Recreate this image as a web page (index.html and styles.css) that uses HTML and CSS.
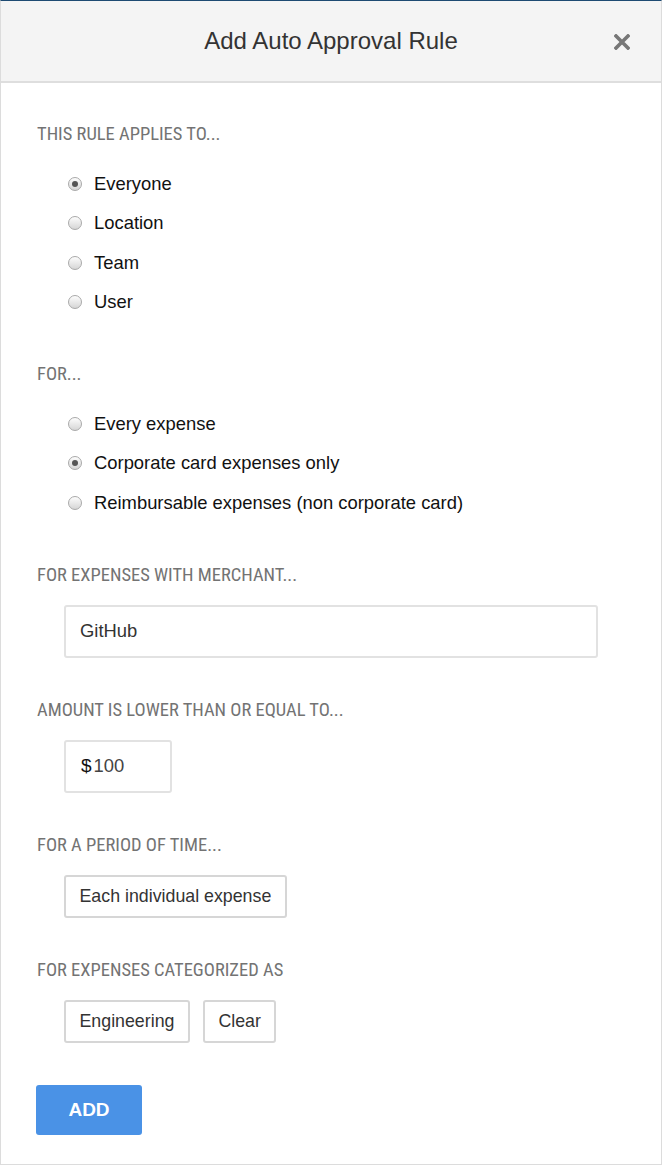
FILE: index.html
```html
<!DOCTYPE html>
<html>
<head>
<meta charset="utf-8">
<link rel="stylesheet" href="styles.css">
</head>
<body>
<div class="modal">
  <header class="modal-header">
    <h1 class="modal-title">Add Auto Approval Rule</h1>
    <button class="close" aria-label="Close">
      <svg width="16" height="16" viewBox="0 0 16 16"><path d="M2 2 L14 14 M14 2 L2 14" stroke="#777" stroke-width="3.6" stroke-linecap="square"/></svg>
    </button>
  </header>
  <div class="modal-body">
    <section class="field">
      <h2 class="field-label">This rule applies to...</h2>
      <div class="options">
        <label class="option"><input type="radio" name="who" checked><span>Everyone</span></label>
        <label class="option"><input type="radio" name="who"><span>Location</span></label>
        <label class="option"><input type="radio" name="who"><span>Team</span></label>
        <label class="option"><input type="radio" name="who"><span>User</span></label>
      </div>
    </section>
    <section class="field">
      <h2 class="field-label">For...</h2>
      <div class="options">
        <label class="option"><input type="radio" name="for"><span>Every expense</span></label>
        <label class="option"><input type="radio" name="for" checked><span>Corporate card expenses only</span></label>
        <label class="option"><input type="radio" name="for"><span>Reimbursable expenses (non corporate card)</span></label>
      </div>
    </section>
    <section class="field">
      <h2 class="field-label">For expenses with merchant...</h2>
      <div class="indent">
        <div class="text-input merchant">GitHub</div>
      </div>
    </section>
    <section class="field">
      <h2 class="field-label">Amount is lower than or equal to...</h2>
      <div class="indent">
        <div class="text-input amount"><span class="currency">$</span><span class="amount-value">100</span></div>
      </div>
    </section>
    <section class="field">
      <h2 class="field-label">For a period of time...</h2>
      <div class="indent buttons">
        <button class="btn">Each individual expense</button>
      </div>
    </section>
    <section class="field">
      <h2 class="field-label">For expenses categorized as</h2>
      <div class="indent buttons">
        <button class="btn">Engineering</button>
        <button class="btn">Clear</button>
      </div>
    </section>
    <button class="btn-primary">ADD</button>
  </div>
</div>
</body>
</html>
```
FILE: styles.css
```css
* { box-sizing: border-box; }
html, body { margin: 0; padding: 0; background: #fff; }
body { font-family: "Liberation Sans", Arial, sans-serif; color: #222; }

.modal {
  width: 662px;
  height: 1165px;
  border: 1px solid #dcdcdc;
  border-top: 1px solid #1d4a72;
  background: #fff;
  display: flex;
  flex-direction: column;
}

.modal-header {
  height: 82px;
  flex: none;
  background: #f4f4f4;
  border-bottom: 2px solid #dedede;
  display: flex;
  align-items: center;
  justify-content: center;
  position: relative;
}
.modal-title {
  margin: 0;
  font-size: 24px;
  font-weight: 400;
  color: #333;
}
.close {
  position: absolute;
  right: 31px;
  top: 33px;
  width: 16px;
  height: 16px;
  padding: 0;
  border: 0;
  background: none;
  display: block;
}
.close svg { display: block; }

.modal-body {
  padding: 41px 36px 0 35px;
  display: flex;
  flex-direction: column;
  align-items: flex-start;
}

.field { margin-bottom: 42px; align-self: stretch; }
.field-label {
  margin: 0 0 20px 1px;
  font-family: "Roboto Condensed", "Liberation Sans Narrow", Roboto, sans-serif;
  font-stretch: condensed;
  font-weight: 400;
  font-size: 18.5px;
  line-height: 20px;
  text-transform: uppercase;
  color: #737373;
}

.options { padding-left: 32px; display: flex; flex-direction: column; }
.option {
  height: 39.5px;
  display: flex;
  align-items: center;
  gap: 12px;
  font-size: 18.4px;
  color: #111;
}
.option input {
  appearance: none;
  -webkit-appearance: none;
  margin: 0;
  width: 14px;
  height: 14px;
  border-radius: 50%;
  border: 1px solid #a9a9a9;
  background: linear-gradient(#fdfdfd, #d6d6d6);
  display: grid;
  place-items: center;
  flex: none;
}
.option input:checked::after {
  content: "";
  width: 6px;
  height: 6px;
  border-radius: 50%;
  background: #555;
}

.indent { padding-left: 28px; }
.buttons { display: flex; gap: 13px; }

.text-input {
  height: 53px;
  border: 2px solid #e2e2e2;
  border-radius: 3px;
  display: flex;
  align-items: center;
  font-size: 18.4px;
  color: #333;
}
.merchant { width: 534px; padding-left: 14px; }
.amount { width: 108px; padding-left: 15px; }
.currency { font-size: 19px; color: #111; margin-right: 2px; }
.amount-value { color: #444; }

.btn {
  height: 43px;
  padding: 0 13.5px;
  border: 2px solid #d6d6d6;
  border-radius: 3px;
  background: #fff;
  font-family: "Liberation Sans", Arial, sans-serif;
  font-size: 17.8px;
  color: #333;
}

.btn-primary {
  width: 106px;
  height: 50px;
  border: 0;
  border-radius: 3px;
  background: #4a92e6;
  color: #fff;
  font-family: "Liberation Sans", Arial, sans-serif;
  font-weight: 700;
  font-size: 19px;
}
```
